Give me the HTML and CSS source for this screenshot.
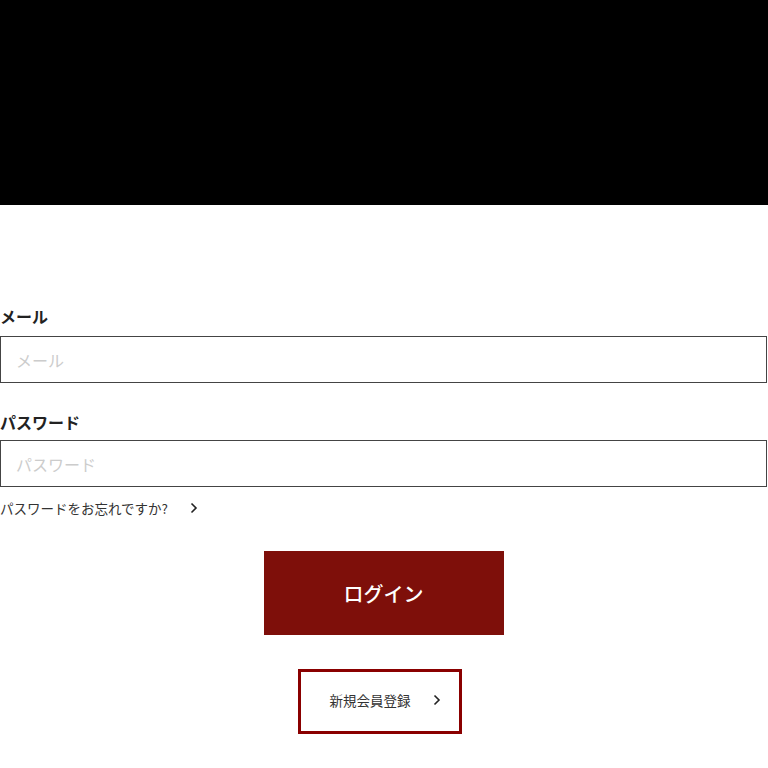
FILE: index.html
```html
<!DOCTYPE html>
<html lang="ja">
<head>
<meta charset="utf-8">
<link rel="stylesheet" href="styles.css">
</head>
<body>
<header class="hero"></header>
<main class="form">
  <label class="label" for="mail">メール</label>
  <input class="field" id="mail" type="text" placeholder="メール">
  <label class="label label-pw" for="pw">パスワード</label>
  <input class="field" id="pw" type="password" placeholder="パスワード">
  <a class="forgot" href="#">パスワードをお忘れですか?<svg class="chev" width="8" height="12" viewBox="0 0 8 12"><path d="M1.5 1.5 6 6 1.5 10.5" fill="none" stroke="#222" stroke-width="1.6"/></svg></a>
  <div class="actions">
    <button class="login" type="button">ログイン</button>
    <a class="register" href="#">新規会員登録<svg class="chev chev-reg" width="8" height="12" viewBox="0 0 8 12"><path d="M1.5 1.5 6 6 1.5 10.5" fill="none" stroke="#222" stroke-width="1.6"/></svg></a>
  </div>
</main>
</body>
</html>
```
FILE: styles.css
```css
* { box-sizing: border-box; }
html, body { margin: 0; padding: 0; background: #fff; }
body {
  font-family: "Noto Sans CJK JP", "Noto Sans", sans-serif;
  color: #222;
}
.hero {
  height: 205px;
  background: #000;
}
.form {
  display: flex;
  flex-direction: column;
  width: 767px;
  padding-top: 99px;
}
.label {
  font-size: 16px;
  font-weight: 700;
  line-height: 24px;
  height: 24px;
  color: #222;
}
.label-pw { margin-top: 27px; }
.field {
  margin-top: 8px;
  width: 100%;
  height: 47px;
  border: 1px solid #444;
  border-radius: 0;
  padding: 0 15px;
  font-family: inherit;
  font-size: 16px;
  color: #222;
  outline: none;
}
.field::placeholder { color: #ccc; }
.label-pw + .field { margin-top: 6px; }
.forgot {
  margin-top: 11px;
  display: flex;
  align-items: center;
  height: 20px;
  font-size: 13.5px;
  color: #333;
  text-decoration: none;
}
.chev { margin-left: 22px; }
.actions {
  display: flex;
  flex-direction: column;
  align-items: center;
}
.login {
  margin-top: 33px;
  width: 240px;
  height: 84px;
  border: none;
  border-radius: 0;
  background: #7e0f0a;
  color: #fff;
  font-family: inherit;
  font-size: 20px;
  font-weight: 500;
  cursor: pointer;
}
.register {
  margin-top: 34px;
  margin-right: 7px;
  width: 164px;
  height: 65px;
  padding: 0 0 3px 10px;
  border: 3px solid #8a0000;
  display: flex;
  align-items: center;
  justify-content: center;
  font-size: 13.5px;
  color: #333;
  text-decoration: none;
}
.chev-reg { margin-left: 22px; }
```
